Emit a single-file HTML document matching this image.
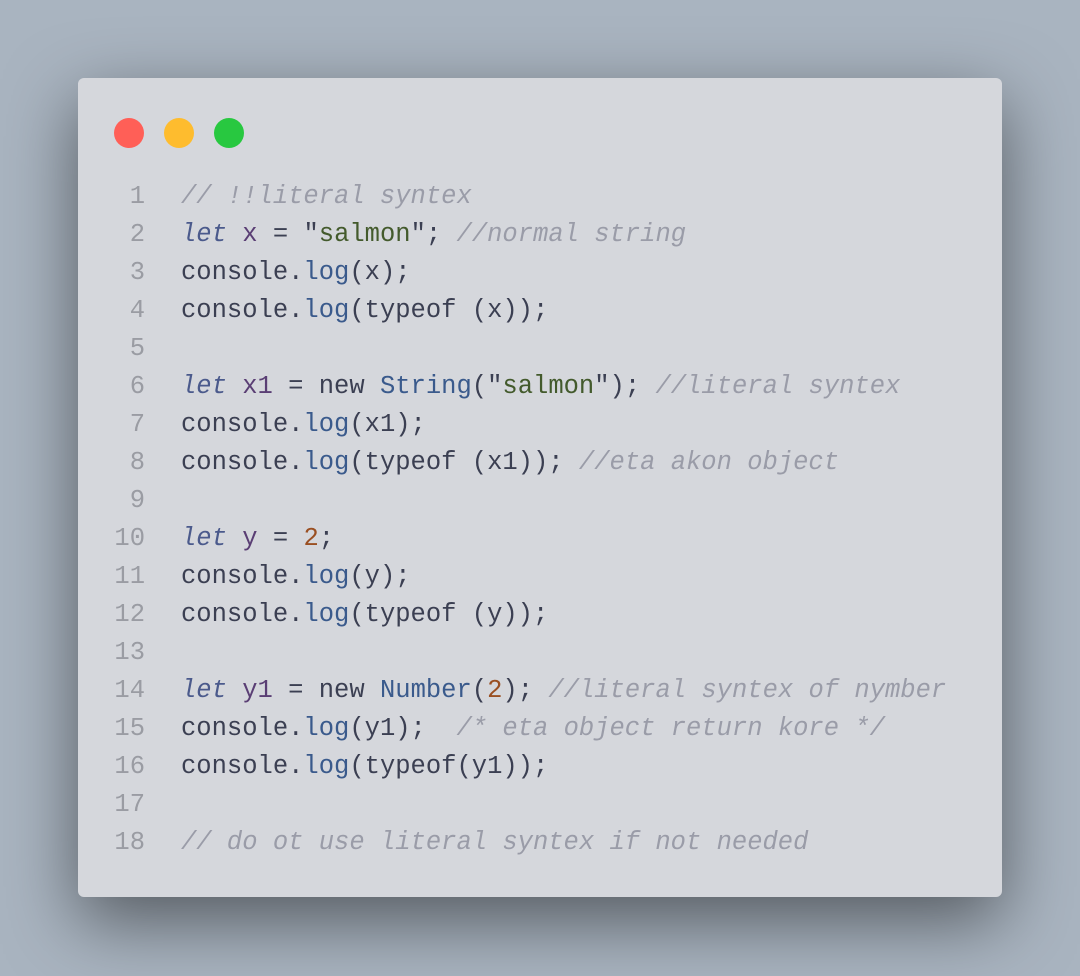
<!DOCTYPE html>
<html><head><style>
html,body{margin:0;padding:0;}
body{width:1080px;height:976px;background:#a9b4c0;position:relative;overflow:hidden;}
.win{position:absolute;left:78px;top:78px;width:924px;height:819px;background:#d5d7dc;border-radius:6px;box-shadow:0 24px 72px rgba(0,0,0,0.5);}
.dot{position:absolute;top:40px;width:30px;height:30px;border-radius:50%;}
.code{position:absolute;left:0;top:100px;font-family:"Liberation Mono",monospace;font-size:25.5px;line-height:38px;color:#3b3f52;white-space:pre;}
.ln{display:inline-block;width:67px;text-align:right;color:#9a9ca3;margin-right:36px;}
.k{color:#4b5a8c;font-style:italic}
.v{color:#5a3e74}
.s{color:#435a2c}
.f{color:#3a5a8c}
.n{color:#9a4f22}
.c{color:#9a9ca8;font-style:italic}
</style></head><body>
<div class="win">
<div class="dot" style="left:36px;background:#ff5f57"></div>
<div class="dot" style="left:86px;background:#febc2e"></div>
<div class="dot" style="left:136px;background:#28c840"></div>
<div class="code"><span class="ln">1</span><span class="c">// !!literal syntex</span>
<span class="ln">2</span><span class="k">let</span> <span class="v">x</span> = "<span class="s">salmon</span>"; <span class="c">//normal string</span>
<span class="ln">3</span>console.<span class="f">log</span>(x);
<span class="ln">4</span>console.<span class="f">log</span>(typeof (x));
<span class="ln">5</span>
<span class="ln">6</span><span class="k">let</span> <span class="v">x1</span> = new <span class="f">String</span>("<span class="s">salmon</span>"); <span class="c">//literal syntex</span>
<span class="ln">7</span>console.<span class="f">log</span>(x1);
<span class="ln">8</span>console.<span class="f">log</span>(typeof (x1)); <span class="c">//eta akon object</span>
<span class="ln">9</span>
<span class="ln">10</span><span class="k">let</span> <span class="v">y</span> = <span class="n">2</span>;
<span class="ln">11</span>console.<span class="f">log</span>(y);
<span class="ln">12</span>console.<span class="f">log</span>(typeof (y));
<span class="ln">13</span>
<span class="ln">14</span><span class="k">let</span> <span class="v">y1</span> = new <span class="f">Number</span>(<span class="n">2</span>); <span class="c">//literal syntex of nymber</span>
<span class="ln">15</span>console.<span class="f">log</span>(y1);  <span class="c">/* eta object return kore */</span>
<span class="ln">16</span>console.<span class="f">log</span>(typeof(y1));
<span class="ln">17</span>
<span class="ln">18</span><span class="c">// do ot use literal syntex if not needed</span></div>
</div>
</body></html>
